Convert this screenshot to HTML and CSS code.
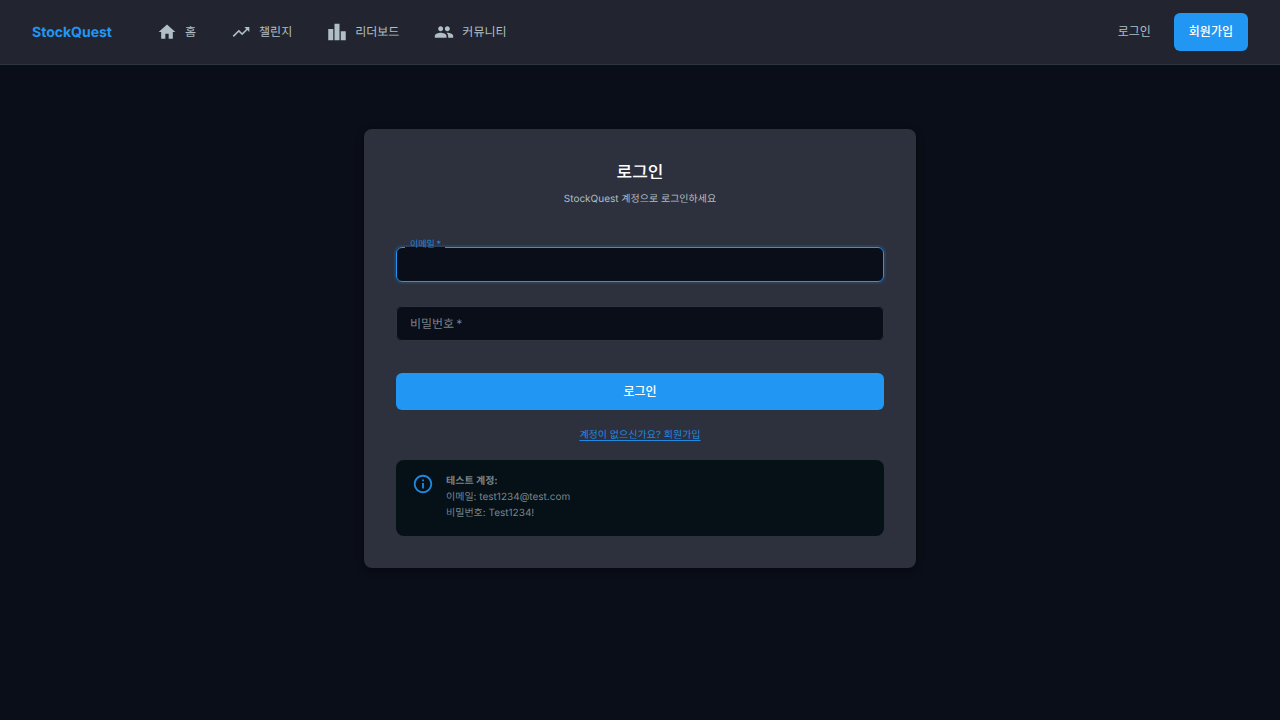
FILE: index.html
```html
<!DOCTYPE html>
<html lang="ko">
<head>
<meta charset="utf-8">
<meta name="viewport" content="width=device-width, initial-scale=1">
<title>StockQuest</title>
<link rel="stylesheet" href="styles.css">
</head>
<body>
<header class="header">
  <a class="logo" href="#">StockQuest</a>
  <nav class="nav">
    <a class="nav-link" href="#"><svg class="icon" viewBox="0 0 24 24" aria-hidden="true"><path d="M10 20v-6h4v6h5v-8h3L12 3 2 12h3v8z"/></svg>홈</a>
    <a class="nav-link" href="#"><svg class="icon" viewBox="0 0 24 24" aria-hidden="true"><path d="m16 6 2.29 2.29-4.88 4.88-4-4L2 16.59 3.41 18l6-6 4 4 6.3-6.29L22 12V6z"/></svg>챌린지</a>
    <a class="nav-link" href="#"><svg class="icon" viewBox="0 0 24 24" aria-hidden="true"><path d="M1.5 8.5h6V22h-6zM9 2h6v20H9zM16.500 11h6v11h-6z"/></svg>리더보드</a>
    <a class="nav-link" href="#"><svg class="icon" viewBox="0 0 24 24" aria-hidden="true"><path d="M16 11c1.660 0 2.990-1.340 2.990-3S17.660 5 16 5s-3 1.340-3 3 1.340 3 3 3m-8 0c1.660 0 2.990-1.340 2.990-3S9.660 5 8 5 5 6.340 5 8s1.340 3 3 3m0 2c-2.330 0-7 1.170-7 3.500V19h14v-2.500c0-2.330-4.670-3.500-7-3.500m8 0c-.29 0-.62.02-.97.05 1.160.84 1.970 1.970 1.970 3.450V19h6v-2.500c0-2.330-4.670-3.500-7-3.500"/></svg>커뮤니티</a>
  </nav>
  <div class="actions">
    <button class="button button-text" type="button">로그인</button>
    <button class="button button-primary" type="button">회원가입</button>
  </div>
</header>
<main class="main">
  <section class="card">
    <h1 class="title">로그인</h1>
    <p class="subtitle">StockQuest 계정으로 로그인하세요</p>
    <form class="form">
      <div class="field field-active">
        <label class="label" for="email">이메일&thinsp;*</label>
        <input class="input" id="email" type="email" required>
        <fieldset class="outline" aria-hidden="true"><legend class="notch"></legend></fieldset>
      </div>
      <div class="field">
        <label class="label" for="password">비밀번호&thinsp;*</label>
        <input class="input" id="password" type="password" required>
        <fieldset class="outline" aria-hidden="true"></fieldset>
      </div>
      <button class="button button-primary submit" type="submit">로그인</button>
    </form>
    <a class="signup" href="#">계정이 없으신가요? 회원가입</a>
    <div class="notice">
      <svg class="notice-icon" viewBox="0 0 24 24" aria-hidden="true"><path d="M11 7h2v2h-2zm0 4h2v6h-2zm1-9C6.480 2 2 6.480 2 12s4.480 10 10 10 10-4.480 10-10S17.520 2 12 2m0 18c-4.410 0-8-3.590-8-8s3.590-8 8-8 8 3.590 8 8-3.590 8-8 8"/></svg>
      <p class="notice-text"><strong>테스트 계정:</strong><br>이메일: test1234@test.com<br>비밀번호: Test1234!</p>
    </div>
  </section>
</main>
</body>
</html>
```

FILE: styles.css
```css
* { box-sizing: border-box; }

body {
  margin: 0;
  min-height: 100vh;
  background: #0a0e18;
  color: #b0bec5;
  font-family: Inter, "Noto Sans CJK KR", sans-serif;
  font-size: 12px;
  line-height: 20px;
  text-rendering: geometricPrecision;
}

a { color: inherit; text-decoration: none; }

.header {
  display: flex;
  align-items: center;
  min-height: 65px;
  padding: 0 32px;
  background: #22252f;
  border-bottom: 1px solid #2d3640;
}

.logo {
  padding-top: 2px;
  color: #2196f3;
  font-size: 14px;
  font-weight: 700;
}

.nav {
  display: flex;
  gap: 19px;
  margin-left: 37px;
}

.nav-link {
  display: flex;
  align-items: center;
  gap: 8px;
  padding: 6px 8px;
}

.icon {
  width: 20px;
  height: 20px;
  fill: #b0bec5;
}

.actions {
  display: flex;
  gap: 8px;
  margin-left: auto;
}

.button {
  border: 0;
  border-radius: 6px;
  padding: 9px 15px;
  font: inherit;
  font-weight: 500;
  cursor: pointer;
}

.button-text {
  background: transparent;
  color: #b0bec5;
  font-weight: 400;
}

.button-primary {
  background: #2196f3;
  color: #fff;
}

.main {
  display: flex;
  justify-content: center;
  padding: 64px 24px;
}

.card {
  display: flex;
  flex-direction: column;
  width: 100%;
  max-width: 552px;
  padding: 33px 32px 32px;
  border-radius: 8px;
  background: #2d303d;
  box-shadow: 0 2px 8px rgba(0, 0, 0, 0.4);
}

.title {
  margin: 0 0 7px;
  color: #fff;
  font-size: 17px;
  font-weight: 500;
  line-height: 22px;
  text-align: center;
}

.subtitle {
  margin: 0 0 40px;
  font-size: 10px;
  line-height: 16px;
  text-align: center;
}

.form { display: flex; flex-direction: column; }

.field {
  position: relative;
  display: flex;
  margin-bottom: 24px;
}

.input {
  width: 100%;
  height: 35px;
  padding: 0 14px;
  border: 0;
  border-radius: 6px;
  outline: 0;
  background: #0a0e18;
  color: #fff;
  font: inherit;
}

.label {
  position: absolute;
  top: 8px;
  left: 14px;
  color: #78808a;
  pointer-events: none;
}

.outline {
  position: absolute;
  inset: 0;
  min-width: 0;
  margin: 0;
  padding: 0 8px;
  border: 1px solid #2d3641;
  border-radius: 6px;
  pointer-events: none;
}

.notch {
  width: 40px;
  height: 1px;
  padding: 0;
}

.field-active .label {
  top: -8px;
  color: #2186d8;
  font-size: 9px;
  line-height: 12px;
}

.field-active .outline { border-color: #2196f3; }
.field-active .input { box-shadow: 0 0 0 2px rgba(33, 150, 243, 0.15); }

.submit {
  margin-top: 8px;
  padding-block: 9px 8px;
}

.signup {
  align-self: center;
  margin: 17px 0;
  color: #218ae0;
  font-size: 10px;
  line-height: 16px;
  text-decoration: underline;
  text-underline-offset: 2px;
}

.notice {
  display: flex;
  gap: 12px;
  padding: 13px 16px 15px;
  border-radius: 8px;
  background: #051017;
}

.notice-icon {
  width: 22px;
  height: 22px;
  fill: #2089de;
}

.notice-text {
  margin: 0;
  color: #78858c;
  font-size: 10px;
  line-height: 16px;
}
```
